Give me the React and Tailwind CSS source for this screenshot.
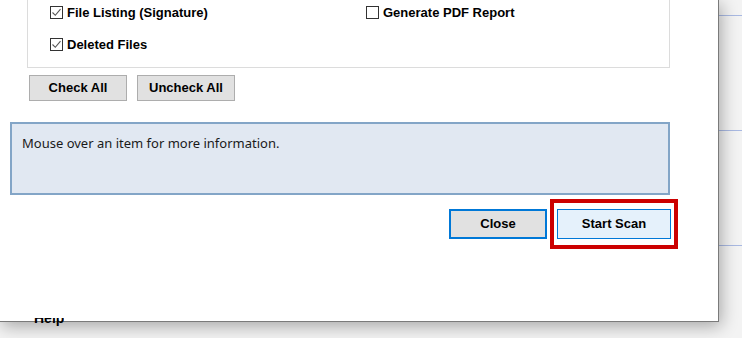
import React from "react";

function CheckBox({ checked }) {
  return (
    <span className="w-[13px] h-[13px] border border-[#333333] bg-white flex items-center justify-center shrink-0">
      {checked && (
        <svg width="11" height="11" viewBox="0 0 11 11">
          <path d="M1.5 5.5 L4.3 8.3 L9.5 2.2" fill="none" stroke="#555" strokeWidth="1.1" />
        </svg>
      )}
    </span>
  );
}

function CheckItem({ checked, label }) {
  return (
    <div className="flex items-center gap-[4px] h-[13px]">
      <CheckBox checked={checked} />
      <span className="text-[13px] font-bold text-black leading-none">{label}</span>
    </div>
  );
}

export default function App() {
  return (
    <div
      className="relative w-[742px] h-[338px] overflow-hidden bg-[#f3f3f3]"
      style={{ fontFamily: '"Liberation Sans", Arial, sans-serif' }}
    >
      {/* background page behind the dialog */}
      <div className="flex flex-col">
        <div className="h-[16px] border-b border-[#a9b9e2]" />
        <div className="h-[115px] border-b border-[#a9b9e2]" />
        <div className="h-[115px] border-b border-[#a9b9e2]" />
      </div>

      {/* dialog window */}
      <div className="absolute left-0 top-0 w-[719px] h-[322px] bg-white border-r border-b border-[#7a7a7a] shadow-[2px_4px_16px_rgba(0,0,0,0.32)] flex flex-col">
        {/* group box */}
        <div className="ml-[27px] w-[643px] h-[68px] border-x border-b border-[#dcdcdc] grid grid-cols-[316px_1fr] pl-[22px] pt-[6px] gap-y-[19px] content-start">
          <CheckItem checked label="File Listing (Signature)" />
          <CheckItem checked={false} label="Generate PDF Report" />
          <CheckItem checked label="Deleted Files" />
        </div>

        {/* check buttons */}
        <div className="flex gap-[10px] ml-[29px] mt-[7px]">
          <button className="w-[98px] h-[26px] bg-[#e1e1e1] border border-[#adadad] text-[13px] font-bold text-black">
            Check All
          </button>
          <button className="w-[98px] h-[26px] bg-[#e1e1e1] border border-[#adadad] text-[13px] font-bold text-black">
            Uncheck All
          </button>
        </div>

        {/* info box */}
        <div
          className="ml-[10px] mt-[21px] w-[660px] h-[73px] bg-[#e1e8f2] border-2 border-[#83a5c7] px-[10px] pt-[10px] text-[13px] text-[#1a1a1a]"
          style={{ fontFamily: '"Noto Sans", "Open Sans", sans-serif' }}
        >
          Mouse over an item for more information.
        </div>

        {/* action buttons */}
        <div className="flex items-center ml-[449px] mt-[4px]">
          <button className="w-[98px] h-[30px] bg-[#e1e1e1] border-2 border-[#0078d7] text-[13px] font-bold text-black">
            Close
          </button>
          <div className="ml-[3px] border-4 border-[#cc0000] px-[3px] py-[6px]">
            <button className="w-[114px] h-[30px] bg-[#e5f1fb] border border-[#0078d7] text-[13px] font-bold text-black block">
              Start Scan
            </button>
          </div>
        </div>
      </div>

      {/* partially visible "Help" label bleeding over the dialog edge */}
      <div className="absolute left-[34px] top-[318px] h-[9px] overflow-hidden">
        <div className="-mt-[7px] text-[14px] leading-[14px] font-bold text-black">Help</div>
      </div>
    </div>
  );
}
